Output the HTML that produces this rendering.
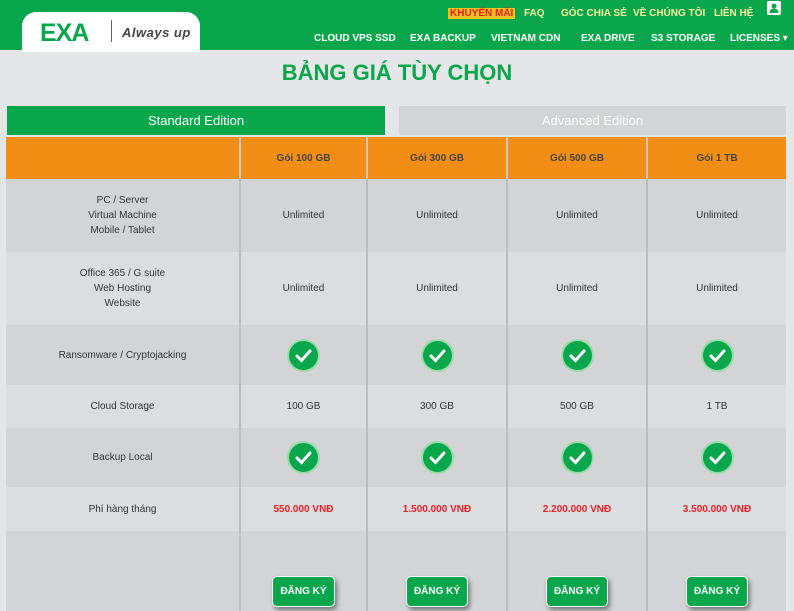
<!DOCTYPE html>
<html><head><meta charset="utf-8"><style>
*{margin:0;padding:0;box-sizing:border-box}
body{width:794px;height:610px;overflow:hidden;background:#e5e6e7;font-family:"Liberation Sans","DejaVu Sans",sans-serif;position:relative}
.hdr{position:absolute;left:0;top:0;width:794px;height:50px;background:#0aa64c}
.logo{position:absolute;left:22px;top:12px;width:178px;height:40px;background:#fff;border-radius:14px 14px 0 0}
.logo .exa{position:absolute;left:18px;top:7px;font-weight:bold;font-size:25px;color:#0aa64c;letter-spacing:-1px}
.logo .bar{position:absolute;left:89px;top:8px;width:1px;height:22px;background:#666}
.logo .aw{position:absolute;left:100px;top:13px;font-size:13px;font-style:italic;font-weight:bold;color:#444;letter-spacing:.5px}
.t1,.t2{position:absolute;color:#fff;font-weight:bold;font-size:10px;white-space:nowrap}
.t1{color:#f6f2a0;top:8px}
.km{background:#f0c020;color:#e02020;padding:0 2px}
.title{position:absolute;top:60px;left:0;width:794px;text-align:center;color:#0aa64c;font-weight:bold;font-size:22px}
.tab{position:absolute;top:106px;height:29px;line-height:29px;text-align:center;font-size:13px;color:#fff}
table{position:absolute;left:6px;top:137px;width:780px;border-collapse:collapse;font-size:10px;color:#333}
td{text-align:center;vertical-align:middle;border-left:2px solid #bcbdbe;line-height:15px}
td:first-child{border-left:none}
tr.h td{background:#f28e16;height:42px;font-weight:bold;color:#444;border-left-color:#c9c9c9}
tr.d td{background:#d3d4d5}
tr.l td{background:#dcddde}
.ck{display:inline-block;width:29px;height:29px;border-radius:50%;background:#0aa64c;box-shadow:0 0 0 2px #9adca8;vertical-align:middle}
.pr{color:#e8202a;font-weight:bold}
.btn{display:inline-block;background:#0aa64c;color:#fff;font-weight:bold;font-size:10px;padding:7px 7px;border-radius:5px;border:1px solid #fff;box-shadow:2px 3px 5px rgba(0,0,0,.45);margin-top:40px}
</style></head><body>
<div class="hdr">
<div class="logo"><span class="exa">EXA</span><span class="bar"></span><span class="aw">Always up</span></div>
<span class="t1" style="left:448px"><span class="km">KHUYẾN MÃI</span></span>
<span class="t1" style="left:524px">FAQ</span>
<span class="t1" style="left:561px">GÓC CHIA SẺ</span>
<span class="t1" style="left:633px">VỀ CHÚNG TÔI</span>
<span class="t1" style="left:714px">LIÊN HỆ</span>
<span style="position:absolute;left:767px;top:1px;width:14px;height:14px;background:#fff;border-radius:2px"><svg width="14" height="14"><circle cx="7" cy="5" r="2.5" fill="#0aa64c"/><path d="M2.5 12c0-3 2-4.5 4.5-4.5s4.5 1.5 4.5 4.5z" fill="#0aa64c"/></svg></span>
<span class="t2" style="left:314px;top:33px">CLOUD VPS SSD</span>
<span class="t2" style="left:410px;top:33px">EXA BACKUP</span>
<span class="t2" style="left:491px;top:33px">VIETNAM CDN</span>
<span class="t2" style="left:581px;top:33px">EXA DRIVE</span>
<span class="t2" style="left:651px;top:33px">S3 STORAGE</span>
<span class="t2" style="left:730px;top:33px">LICENSES ▾</span>
</div>
<div class="title">BẢNG GIÁ TÙY CHỌN</div>
<div class="tab" style="left:7px;width:378px;background:#0aa64c">Standard Edition</div>
<div class="tab" style="left:399px;width:387px;background:#d3d4d5">Advanced Edition</div>
<table>
<tr class="h"><td style="width:234px"></td><td style="width:127px">Gói 100 GB</td><td style="width:140px">Gói 300 GB</td><td style="width:140px">Gói 500 GB</td><td>Gói 1 TB</td></tr>
<tr class="d" style="height:73px"><td>PC / Server<br>Virtual Machine<br>Mobile / Tablet</td><td>Unlimited</td><td>Unlimited</td><td>Unlimited</td><td>Unlimited</td></tr>
<tr class="l" style="height:73px"><td>Office 365 / G suite<br>Web Hosting<br>Website</td><td>Unlimited</td><td>Unlimited</td><td>Unlimited</td><td>Unlimited</td></tr>
<tr class="d" style="height:60px"><td>Ransomware / Cryptojacking</td><td><span class="ck"><svg width="29" height="29"><path d="M8 15l4.5 4.5 8.5-9.5" stroke="#fff" stroke-width="3" fill="none" stroke-linecap="round"/></svg></span></td><td><span class="ck"><svg width="29" height="29"><path d="M8 15l4.5 4.5 8.5-9.5" stroke="#fff" stroke-width="3" fill="none" stroke-linecap="round"/></svg></span></td><td><span class="ck"><svg width="29" height="29"><path d="M8 15l4.5 4.5 8.5-9.5" stroke="#fff" stroke-width="3" fill="none" stroke-linecap="round"/></svg></span></td><td><span class="ck"><svg width="29" height="29"><path d="M8 15l4.5 4.5 8.5-9.5" stroke="#fff" stroke-width="3" fill="none" stroke-linecap="round"/></svg></span></td></tr>
<tr class="l" style="height:43px"><td>Cloud Storage</td><td>100 GB</td><td>300 GB</td><td>500 GB</td><td>1 TB</td></tr>
<tr class="d" style="height:59px"><td>Backup Local</td><td><span class="ck"><svg width="29" height="29"><path d="M8 15l4.5 4.5 8.5-9.5" stroke="#fff" stroke-width="3" fill="none" stroke-linecap="round"/></svg></span></td><td><span class="ck"><svg width="29" height="29"><path d="M8 15l4.5 4.5 8.5-9.5" stroke="#fff" stroke-width="3" fill="none" stroke-linecap="round"/></svg></span></td><td><span class="ck"><svg width="29" height="29"><path d="M8 15l4.5 4.5 8.5-9.5" stroke="#fff" stroke-width="3" fill="none" stroke-linecap="round"/></svg></span></td><td><span class="ck"><svg width="29" height="29"><path d="M8 15l4.5 4.5 8.5-9.5" stroke="#fff" stroke-width="3" fill="none" stroke-linecap="round"/></svg></span></td></tr>
<tr class="l" style="height:44px"><td>Phí hàng tháng</td><td class="pr">550.000 VNĐ</td><td class="pr">1.500.000 VNĐ</td><td class="pr">2.200.000 VNĐ</td><td class="pr">3.500.000 VNĐ</td></tr>
<tr class="d" style="height:80px"><td></td><td><span class="btn">ĐĂNG KÝ</span></td><td><span class="btn">ĐĂNG KÝ</span></td><td><span class="btn">ĐĂNG KÝ</span></td><td><span class="btn">ĐĂNG KÝ</span></td></tr>
</table>
</body></html>
